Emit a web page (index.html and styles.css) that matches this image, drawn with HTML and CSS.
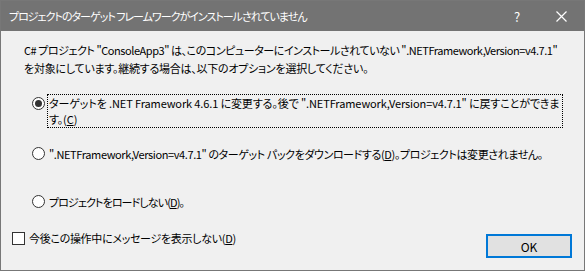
FILE: index.html
```html
<!DOCTYPE html>
<html lang="ja">
<head>
<meta charset="utf-8">
<title>プロジェクトのターゲット フレームワークがインストールされていません</title>
<link rel="stylesheet" href="styles.css">
</head>
<body>
<div class="window">
  <div class="titlebar">
    <span class="title">プロジェクトのターゲット フレームワークがインストールされていません</span>
    <span class="help">?</span>
    <span class="close"><svg width="11" height="11" viewBox="0 0 11 11"><path d="M0.5 0.5 L10.5 10.5 M10.5 0.5 L0.5 10.5" stroke="#ffffff" stroke-width="1.2" fill="none"/></svg></span>
  </div>
  <div class="content">
    <p class="msg"><span class="l1">C# プロジェクト "ConsoleApp3" は、このコンピューターにインストールされていない ".NETFramework,Version=v4.7.1"</span><br><span class="l2">を対象にしています。継続する場合は、以下のオプションを選択してください。</span></p>
    <div class="options">
      <div class="opt opt-first">
        <span class="radio checked"></span>
        <span class="opt-text focus">ターゲットを .NET Framework 4.6.1 に変更する。後で ".NETFramework,Version=v4.7.1" に戻すことができま<br>す。(<u>C</u>)</span>
      </div>
      <div class="opt opt-second">
        <span class="radio"></span>
        <span class="opt-text t2">".NETFramework,Version=v4.7.1" のターゲット パックをダウンロードする(<u>D</u>)。プロジェクトは変更されません。</span>
      </div>
      <div class="opt opt-third">
        <span class="radio"></span>
        <span class="opt-text t3">プロジェクトをロードしない(<u>D</u>)。</span>
      </div>
    </div>
    <div class="footer">
      <div class="chk"><span class="box"></span><span class="chk-text">今後この操作中にメッセージを表示しない(<u>D</u>)</span></div>
      <button class="ok">OK</button>
    </div>
  </div>
</div>
</body>
</html>
```

FILE: styles.css
```css
* { box-sizing: border-box; }
html, body { margin: 0; padding: 0; }
body {
  width: 585px;
  height: 271px;
  overflow: hidden;
  font-family: "Noto Sans CJK JP", sans-serif;
  font-feature-settings: "palt";
  font-size: 11px;
  letter-spacing: -0.3px;
  color: #000;
}
.window {
  width: 585px;
  height: 271px;
  border: 1px solid #777777;
  background: #f0f0f0;
  display: flex;
  flex-direction: column;
}
.titlebar {
  height: 30px;
  background: #737373;
  color: #ffffff;
  display: flex;
  align-items: center;
  padding-left: 8px;
  flex-shrink: 0;
}
.title {
  flex: 1;
  white-space: nowrap;
  font-size: 11px;
  letter-spacing: -1px;
}
.help {
  width: 20px;
  text-align: center;
  font-size: 13px;
  margin-right: 29px;
  letter-spacing: 0;
}
.close {
  display: flex;
  width: 11px;
  margin-right: 17px;
}
.content {
  flex: 1;
  display: flex;
  flex-direction: column;
  padding: 10px 12px 0 23px;
}
.msg {
  margin: 0;
  line-height: 18px;
  white-space: nowrap;
}
.l1 { letter-spacing: -0.45px; }
.l2 { letter-spacing: -0.25px; }
.options {
  display: flex;
  flex-direction: column;
  padding-left: 8px;
  margin-top: 18px;
}
.opt {
  display: flex;
  align-items: flex-start;
  white-space: nowrap;
  line-height: 16px;
}
.opt-second { margin-top: 17px; }
.opt-third { margin-top: 30px; }
.radio {
  width: 13px;
  height: 13px;
  border: 1px solid #333333;
  border-radius: 50%;
  background: #ffffff;
  margin-top: 2px;
  margin-right: 2px;
  flex-shrink: 0;
  position: relative;
}
.radio.checked::after {
  content: "";
  position: absolute;
  left: 2px;
  top: 2px;
  width: 7px;
  height: 7px;
  border-radius: 50%;
  background: #333333;
}
.opt-text { padding: 0 1px; border: 1px solid transparent; }
.opt-text.focus {
  border: 1px dotted #000;
  width: 516px;
  margin-top: -1px;
  letter-spacing: -0.12px;
}
.t2 { letter-spacing: -0.4px; }
.t3 { letter-spacing: -0.9px; }
.footer {
  display: flex;
  justify-content: space-between;
  align-items: flex-start;
  margin-top: 18px;
  margin-left: -12px;
}
.chk { display: flex; align-items: center; white-space: nowrap; margin-top: 1px; }
.box {
  width: 13px;
  height: 13px;
  border: 1px solid #333333;
  background: #ffffff;
  margin-right: 4px;
}
.ok {
  width: 86px;
  height: 24px;
  margin-top: 5px;
  background: #e1e1e1;
  border: 2px solid #0078d7;
  font-family: "Noto Sans CJK JP", sans-serif;
  font-size: 12px;
  letter-spacing: 0;
  color: #000;
  padding: 0;
}
```
